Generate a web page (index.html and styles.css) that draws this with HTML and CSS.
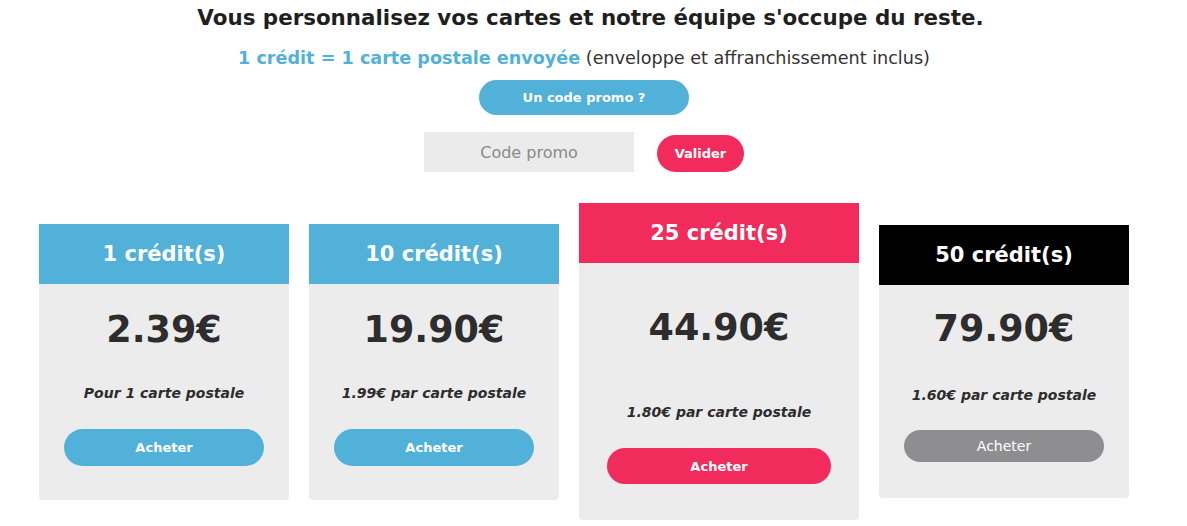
FILE: index.html
```html
<!DOCTYPE html>
<html lang="fr">
<head>
<meta charset="utf-8">
<title>Crédits</title>
<link rel="stylesheet" href="styles.css">
</head>
<body>
<div class="page">
  <h1 class="title">Vous personnalisez vos cartes et notre équipe s'occupe du reste.</h1>
  <p class="lead"><strong class="lead-strong">1 crédit = 1 carte postale envoyée</strong> (enveloppe et affranchissement inclus)</p>
  <div class="promo-toggle-row"><button class="promo-toggle">Un code promo ?</button></div>
  <form class="promo-form">
    <input class="promo-input" type="text" placeholder="Code promo">
    <button type="button" class="btn-validate">Valider</button>
  </form>
  <div class="cards">
    <div class="card card-blue card-1">
      <div class="card-head">1 crédit(s)</div>
      <div class="card-body">
        <div class="price">2.39€</div>
        <div class="unit">Pour 1 carte postale</div>
        <button class="buy">Acheter</button>
      </div>
    </div>
    <div class="card card-blue card-10">
      <div class="card-head">10 crédit(s)</div>
      <div class="card-body">
        <div class="price">19.90€</div>
        <div class="unit">1.99€ par carte postale</div>
        <button class="buy">Acheter</button>
      </div>
    </div>
    <div class="card card-pink card-25">
      <div class="card-head">25 crédit(s)</div>
      <div class="card-body">
        <div class="price">44.90€</div>
        <div class="unit">1.80€ par carte postale</div>
        <button class="buy">Acheter</button>
      </div>
    </div>
    <div class="card card-black card-50">
      <div class="card-head">50 crédit(s)</div>
      <div class="card-body">
        <div class="price">79.90€</div>
        <div class="unit">1.60€ par carte postale</div>
        <button class="buy">Acheter</button>
      </div>
    </div>
  </div>
</div>
</body>
</html>
```
FILE: styles.css
```css
html, body {
  margin: 0;
  padding: 0;
  background: #ffffff;
}
body {
  font-family: "DejaVu Sans", "Open Sans", sans-serif;
  color: #2b2b2b;
}
.page {
  width: 1168px;
  text-align: center;
}
.title {
  margin: 0;
  padding: 1px 0 0 13px;
  font-size: 21.4px;
  line-height: 34px;
  font-weight: 700;
  color: #1f1f1f;
}
.lead {
  margin: 6px 0 0;
  font-size: 17.6px;
  line-height: 34px;
  color: #333;
}
.lead-strong {
  color: #52b1d8;
  font-weight: 700;
}
.promo-toggle-row {
  display: flex;
  justify-content: center;
  margin-top: 5px;
}
.promo-toggle {
  width: 210px;
  height: 35px;
  border: 0;
  border-radius: 18px;
  background: #52b1d8;
  color: #fff;
  font-family: inherit;
  font-size: 13px;
  font-weight: 700;
  cursor: pointer;
}
.promo-form {
  display: flex;
  justify-content: center;
  align-items: center;
  gap: 23px;
  margin: 17px 0 0;
}
.promo-input {
  width: 210px;
  height: 40px;
  box-sizing: border-box;
  border: 0;
  background: #ebebeb;
  font-family: inherit;
  font-size: 16px;
  text-align: center;
  color: #555;
  outline: none;
}
.promo-input::placeholder {
  color: #8a8a8a;
}
.btn-validate {
  width: 87px;
  height: 37px;
  margin-top: 3px;
  border: 0;
  border-radius: 19px;
  background: #f12b5c;
  color: #fff;
  font-family: inherit;
  font-size: 13px;
  font-weight: 700;
}
.cards {
  display: flex;
  justify-content: center;
  align-items: center;
  gap: 20px;
  margin-top: 31px;
}
.card {
  width: 250px;
  display: flex;
  flex-direction: column;
  border-radius: 0 0 4px 4px;
  overflow: hidden;
  background: #ececec;
}
.card-head {
  height: 60px;
  line-height: 60px;
  color: #fff;
  font-size: 21px;
  font-weight: 700;
}
.card-blue .card-head { background: #52b1d8; }
.card-pink .card-head { background: #f12b5c; }
.card-black .card-head { background: #000; }
.card-body {
  display: flex;
  flex-direction: column;
  align-items: center;
  padding: 23px 0 34px;
}
.price {
  font-size: 36.5px;
  line-height: 46px;
  font-weight: 700;
  color: #2d2d2d;
}
.unit {
  margin-top: 30px;
  font-size: 14px;
  line-height: 20px;
  font-weight: 700;
  font-style: italic;
  color: #2d2d2d;
}
.buy {
  margin-top: 26px;
  width: 200px;
  height: 37px;
  border: 0;
  border-radius: 19px;
  color: #fff;
  font-family: inherit;
  font-size: 13px;
  font-weight: 700;
}
.card-blue .buy { background: #52b1d8; }
.card-pink .buy { background: #f12b5c; }
.card-black .buy {
  background: #8e8e90;
  font-weight: 400;
  font-size: 14px;
}
.card-25 {
  width: 280px;
}
.card-25 .card-body {
  padding: 42px 0 36px;
}
.card-25 .unit { margin-top: 51px; }
.card-25 .buy {
  width: 224px;
  height: 36px;
}
.card-50 .card-body {
  padding: 21px 0 36px;
}
.card-50 .unit { margin-top: 33px; }
.card-50 .buy {
  margin-top: 25px;
  height: 32px;
}
```
